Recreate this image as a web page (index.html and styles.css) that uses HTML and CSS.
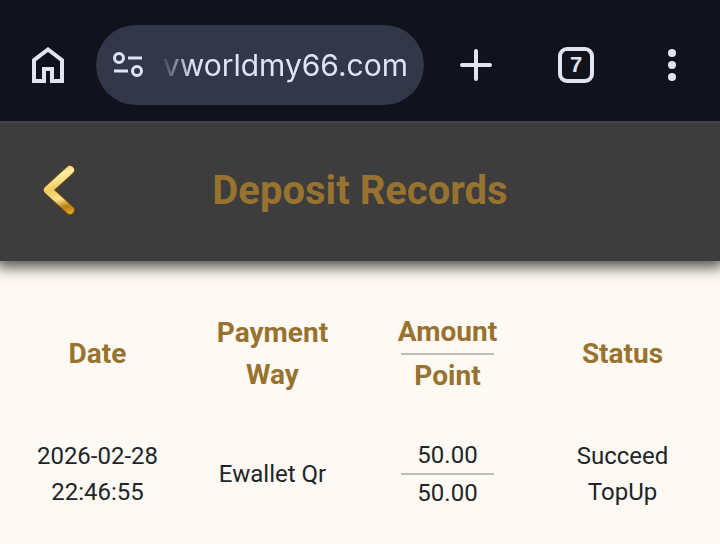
FILE: index.html
```html
<!DOCTYPE html>
<html lang="en">
  <head>
    <meta charset="UTF-8" />
    <meta name="viewport" content="width=device-width, initial-scale=1.0" />
    <title>Deposit Records</title>
    <link rel="stylesheet" href="styles.css">
  </head>
  <body>
    <div class="browser-bar">
      <a class="bar-button" href="#" aria-label="Home">
        <svg width="32" height="36" viewBox="0 0 32 36" fill="none" stroke="currentColor" stroke-width="4">
          <path d="M2 13.2L16 2.500l14 10.700V34H20V22h-8v12H2z" />
        </svg>
      </a>
      <div class="address">
        <svg width="32" height="26" viewBox="0 0 32 26" fill="none" stroke="currentColor" stroke-width="3">
          <circle cx="7" cy="6" r="4.5" />
          <path d="M16 6h14M2 19h14" />
          <circle cx="25" cy="19" r="4.5" />
        </svg>
        <input class="address-input" type="text" value="vworldmy66.com" aria-label="Address" />
      </div>
      <button class="bar-button new-tab" aria-label="New tab">
        <svg width="32" height="32" viewBox="0 0 32 32" fill="none" stroke="currentColor" stroke-width="4" stroke-linecap="round">
          <path d="M16 2v28M2 16h28" />
        </svg>
      </button>
      <button class="bar-button" aria-label="7 open tabs">
        <span class="tab-count">7</span>
      </button>
      <button class="bar-button" aria-label="Menu">
        <svg width="8" height="32" viewBox="0 0 8 32" fill="currentColor">
          <circle cx="4" cy="4" r="4" />
          <circle cx="4" cy="16" r="4" />
          <circle cx="4" cy="28" r="4" />
        </svg>
      </button>
    </div>

    <header class="page-header">
      <a class="back" href="#" aria-label="Back">
        <svg width="34" height="52" viewBox="0 0 34 52" fill="none" stroke-linecap="round" stroke-linejoin="round">
          <defs>
            <linearGradient id="gold" gradientUnits="userSpaceOnUse" x1="10" y1="2" x2="24" y2="50">
              <stop offset="0" stop-color="#e9bd4e" />
              <stop offset="0.2" stop-color="#fff0a8" />
              <stop offset="0.45" stop-color="#f0cb62" />
              <stop offset="0.68" stop-color="#f9e08a" />
              <stop offset="0.86" stop-color="#b87f12" />
              <stop offset="1" stop-color="#dba62e" />
            </linearGradient>
          </defs>
          <path d="M28 6L6 26L28 46" stroke="#6b4a12" stroke-width="10" />
          <path d="M28 6L6 26L28 46" stroke="url(#gold)" stroke-width="8" />
        </svg>
      </a>
      <h1>Deposit Records</h1>
    </header>

    <main>
      <table class="records">
        <thead>
          <tr>
            <th>Date</th>
            <th>Payment<br />Way</th>
            <th>
              Amount
              <hr />
              Point
            </th>
            <th>Status</th>
          </tr>
        </thead>
        <tbody>
          <tr>
            <td>2026-02-28<br />22:46:55</td>
            <td>Ewallet Qr</td>
            <td>
              50.00
              <hr />
              50.00
            </td>
            <td>Succeed<br />TopUp</td>
          </tr>
        </tbody>
      </table>
    </main>
  </body>
</html>
```

FILE: styles.css
```css
body {
  margin: 0;
  font-family: Roboto, Arial, sans-serif;
  background-color: #fefaf3;
  color: #212529;
}

.browser-bar {
  position: relative;
  z-index: 1;
  display: flex;
  align-items: center;
  height: 80px;
  padding: 25px 0 16px;
  background-color: #10131c;
  border-bottom: 2px solid #41434f;
  color: #e1e3ee;
}

.bar-button {
  display: flex;
  align-items: center;
  justify-content: center;
  width: 96px;
  height: 80px;
  padding: 0;
  border: none;
  background: none;
  color: inherit;
}

.new-tab {
  margin: 0 4px;
}

.address {
  display: flex;
  flex: 1;
  align-items: center;
  gap: 16px;
  min-width: 0;
  height: 80px;
  padding: 0 16px;
  box-sizing: border-box;
  border-radius: 40px;
  background-color: #33374a;
  color: #dfe3f7;
}

.address svg {
  flex: none;
}

.address-input {
  flex: 1;
  min-width: 0;
  padding: 0;
  border: none;
  outline: none;
  background: none;
  color: inherit;
  font-family: Inter, sans-serif;
  font-size: 30px;
  text-align: right;
  mask-image: linear-gradient(to right, transparent, #000 32px);
}

.tab-count {
  width: 28px;
  border: 4px solid currentColor;
  border-radius: 9px;
  font: bold 22px/28px "Liberation Sans", Arial, sans-serif;
}

.page-header {
  display: grid;
  grid-template-columns: 80px 1fr 80px;
  align-items: center;
  height: 134px;
  padding-bottom: 4px;
  background-color: #3d3d3d;
  box-shadow: 0 2px 14px 4px rgba(0, 0, 0, 0.7);
}

.back {
  display: flex;
  justify-content: flex-end;
  padding-right: 4px;
}

h1 {
  margin: 0;
  color: #97732f;
  font-size: 40px;
  text-align: center;
}

main {
  padding: 30px 10px 0;
}

.records {
  width: 100%;
  table-layout: fixed;
  border-collapse: collapse;
  text-align: center;
}

.records th,
.records td {
  padding: 20px 0;
}

.records th {
  color: #97732f;
  font-size: 28px;
  line-height: 42px;
}

.records td {
  font-size: 24px;
  line-height: 36px;
}

.records hr {
  width: 93px;
  margin: 0 auto;
  border: none;
  border-top: 2px solid #bebebb;
}
```
